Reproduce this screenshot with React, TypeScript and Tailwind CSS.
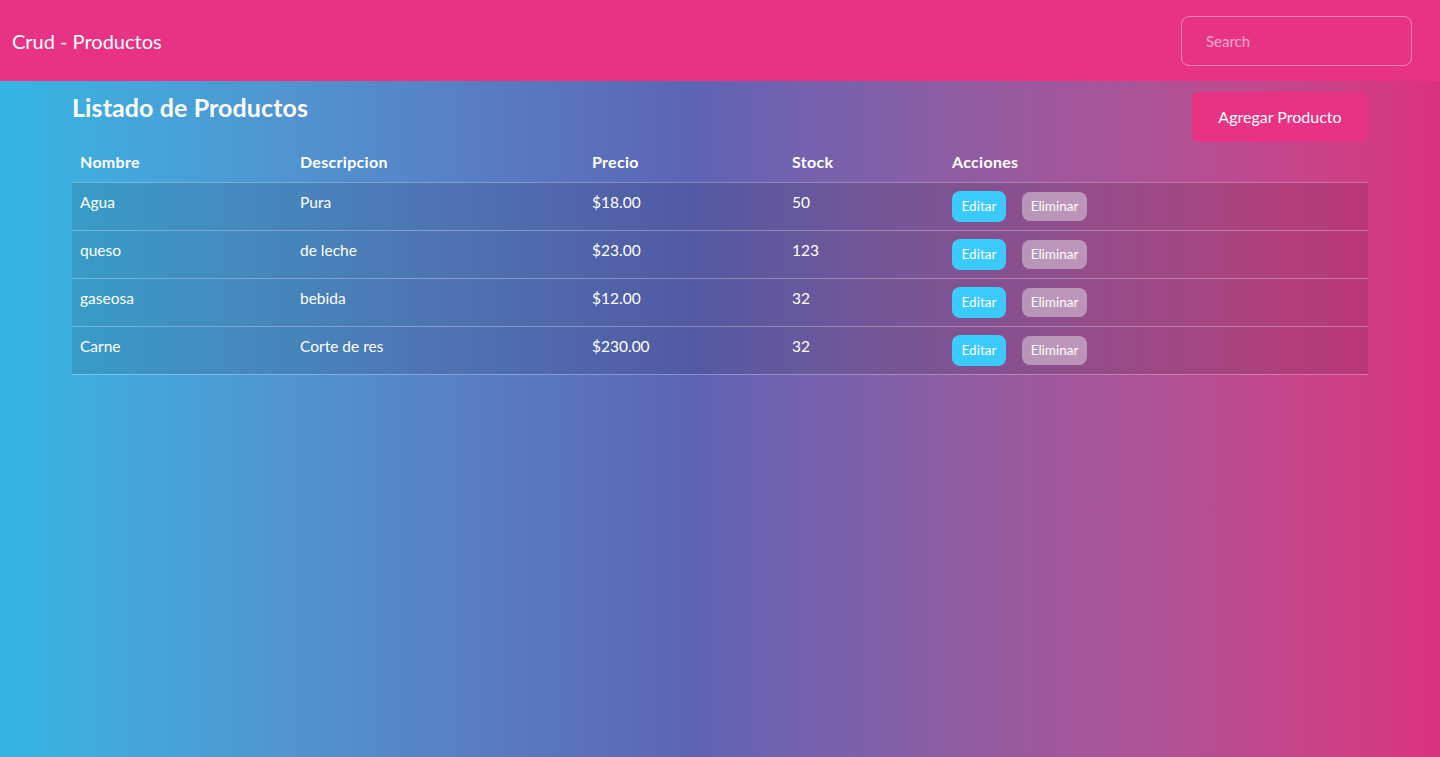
const productos = [
  { nombre: "Agua", descripcion: "Pura", precio: 18, stock: 50 },
  { nombre: "queso", descripcion: "de leche", precio: 23, stock: 123 },
  { nombre: "gaseosa", descripcion: "bebida", precio: 12, stock: 32 },
  { nombre: "Carne", descripcion: "Corte de res", precio: 230, stock: 32 },
];

const App = () => {
  return (
    <div className="min-h-[757px] w-full bg-gradient-to-r from-[#33b6e4] via-[#5c64b5] via-48% to-[#db3080] font-['Segoe_UI','Lato','Noto_Sans',sans-serif] text-white">
      <nav className="h-[81px] bg-[#e83283] flex items-center justify-between pl-3 pr-7">
        <span className="text-[20px]">Crud - Productos</span>
        <input
          type="text"
          placeholder="Search"
          className="w-[231px] h-[50px] rounded-lg border border-white/40 bg-transparent pl-6 text-[15px] text-white placeholder:text-white/60 focus:outline-none"
        />
      </nav>

      <div className="mx-[72px] pt-[11px]">
        <div className="flex justify-between items-start">
          <h1 className="text-[25px] font-bold leading-[30px] tracking-[0.1px]">Listado de Productos</h1>
          <button className="w-[176px] h-[50px] rounded-lg bg-[#e83283] text-[16px]">
            Agregar Producto
          </button>
        </div>

        <table className="w-full mt-[3px] border-collapse text-left text-[15.5px]">
          <thead>
            <tr className="h-[37px] border-b border-white/30">
              <th className="w-[220px] px-2 pb-[2px] text-[16px] font-bold tracking-[0.3px]">Nombre</th>
              <th className="w-[292px] px-2 pb-[2px] text-[16px] font-bold tracking-[0.3px]">Descripcion</th>
              <th className="w-[200px] px-2 pb-[2px] text-[16px] font-bold tracking-[0.3px]">Precio</th>
              <th className="w-[160px] px-2 pb-[2px] text-[16px] font-bold tracking-[0.3px]">Stock</th>
              <th className="px-2 pb-[2px] text-[16px] font-bold tracking-[0.3px]">Acciones</th>
            </tr>
          </thead>
          <tbody>
            {productos.map((p) => (
              <tr key={p.nombre} className="h-[48px] bg-black/10 border-b border-white/30">
                <td className="px-2 align-top pt-[8px]">{p.nombre}</td>
                <td className="px-2 align-top pt-[8px]">{p.descripcion}</td>
                <td className="px-2 align-top pt-[8px]">${p.precio.toFixed(2)}</td>
                <td className="px-2 align-top pt-[8px]">{p.stock}</td>
                <td className="px-2 align-middle">
                  <div className="flex items-center gap-4">
                    <button className="h-[31px] w-[54px] rounded-lg bg-[#3bcafc] text-[13.5px]">Editar</button>
                    <button className="h-[29px] w-[65px] rounded-lg bg-white/40 text-[13.5px]">Eliminar</button>
                  </div>
                </td>
              </tr>
            ))}
          </tbody>
        </table>
      </div>
    </div>
  );
};

export default App;
